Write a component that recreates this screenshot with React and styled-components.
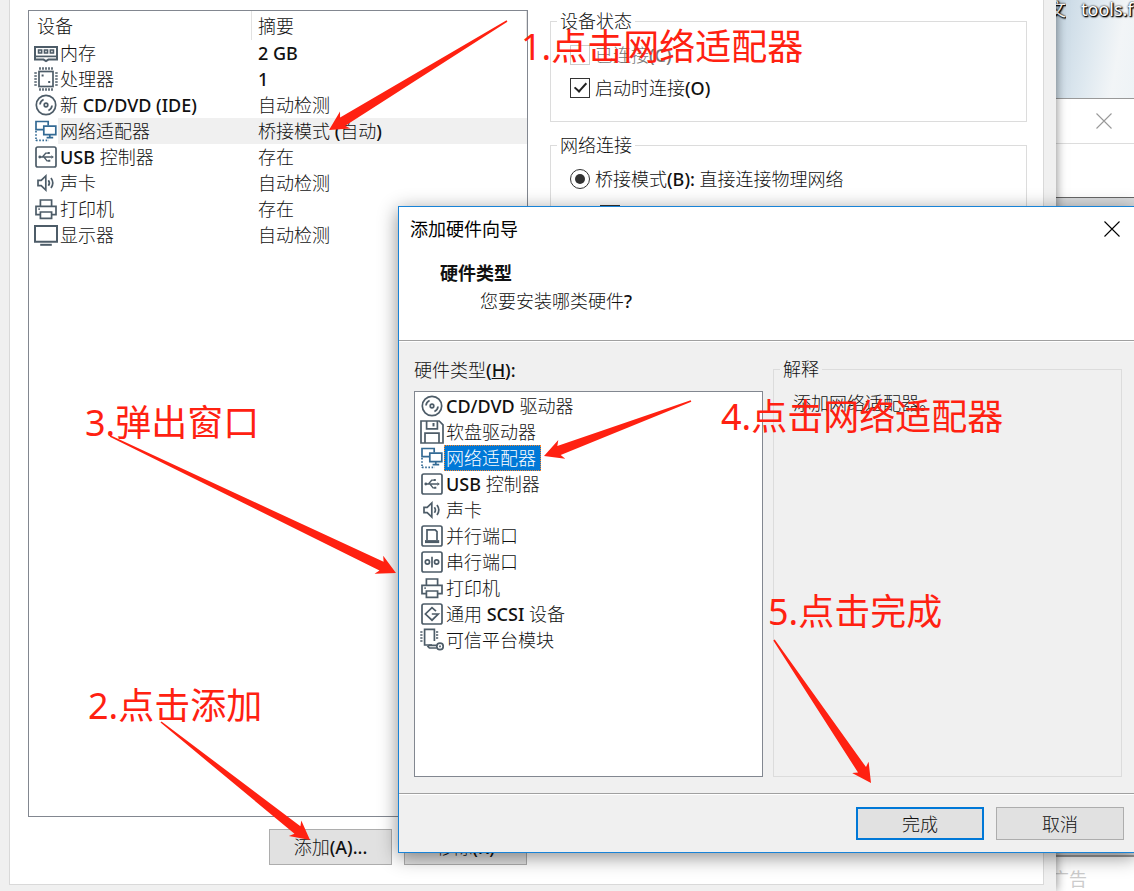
import React from "react";
import styled, { createGlobalStyle, css } from "styled-components";

const GlobalStyle = createGlobalStyle`
  *, *::before, *::after { box-sizing: border-box; }
  body {
    margin: 0;
    background: #f0f0f0;
    color: #111;
    font: 300 18px/24px "Noto Sans", "Noto Sans CJK SC", sans-serif;
  }
  button, input { font: inherit; color: inherit; margin: 0; }
`;

const Desktop = styled.div`
  position: relative;
  display: flex;
  min-height: 100vh;
  overflow: hidden;
`;

/* ---------- text ---------- */

const Latin = styled.span`
  font-weight: 500;
`;

// Interface text pairs a light Chinese face with a firmer Latin one.
function Mixed({ children }) {
  return (
    <span>
      {children
        .split(/([\x20-\x7e]+)/)
        .filter(Boolean)
        .map((run, i) => (/^[\x20-\x7e]/.test(run) ? <Latin key={i}>{run}</Latin> : run))}
    </span>
  );
}

/* ---------- icons ---------- */

const Glyph = styled.svg.attrs({ viewBox: "0 0 24 24", "aria-hidden": true })`
  flex: none;
  width: 24px;
  height: 24px;
  fill: none;
  stroke: ${(p) => p.$tint || "#4d5c68"};
  stroke-width: 1.7;
`;

const icons = {
  memory: (
    <Glyph>
      <path d="M1 6h22v12.6h-8.6L12 20l-2.4-1.4H1z" strokeWidth="2" />
      <path d="M1 15.4h22" />
      <path d="M4.6 9h3v3h-3zM10.5 9h3v3h-3zM16.4 9h3v3h-3z" />
    </Glyph>
  ),
  cpu: (
    <Glyph>
      <rect x="5" y="4.5" width="14" height="15" />
      <path d="M6 .3v2.4M9 .3v2.4M12 .3v2.4M15 .3v2.4M18 .3v2.4M6 21.3v2.4M9 21.3v2.4M12 21.3v2.4M15 21.3v2.4M18 21.3v2.4M.3 6h2.5M.3 9h2.5M.3 12h2.5M.3 15h2.5M.3 18h2.5M21.2 6h2.5M21.2 9h2.5M21.2 12h2.5M21.2 15h2.5M21.2 18h2.5" />
      <path d="M7.6 8.6h2M14.2 15h2" strokeWidth="2" />
    </Glyph>
  ),
  disc: (
    <Glyph>
      <circle cx="12" cy="12" r="9.7" />
      <circle cx="12" cy="12" r="1.8" />
      <path d="M6 11.5A6 6 0 0 1 9.6 6.5M18 12.5a6 6 0 0 1-3.6 5" />
    </Glyph>
  ),
  network: (
    <Glyph $tint="#336a94">
      <path d="M10 10.6H2V2.5h12.2v4" />
      <path d="M9.8 7.2h12v8.4h-12zM15.8 15.6v3.2M12.6 18.6h6.6" />
      <path d="M2 12v10M2 21.3h13" strokeDasharray="1.6 1.6" />
    </Glyph>
  ),
  usb: (
    <Glyph>
      <rect x="2" y="2" width="20" height="20" rx="1.8" />
      <path d="M5.5 12h12M8.4 12l3.3-3.8h2.6M10 12l3 3.8h2" strokeWidth="1.3" />
      <path d="M17.3 10.2l2.6 1.8-2.6 1.8z" fill="#4d5c68" stroke="none" />
      <circle cx="5.8" cy="12" r="1.4" fill="#4d5c68" stroke="none" />
      <path d="M13.8 7.1h2v2h-2zM14.3 14.8h2v2h-2z" fill="#4d5c68" stroke="none" />
    </Glyph>
  ),
  sound: (
    <Glyph>
      <path d="M4 9.3h3.2l4.6-4.4v14.2l-4.6-4.4H4z" />
      <path d="M14.4 9.2q2 2.8 0 5.6M17 7q3.6 5 0 10" />
    </Glyph>
  ),
  printer: (
    <Glyph>
      <path d="M6.4 9V3h11.2v6" />
      <path d="M6.4 17.6H2V9.4h20v8.2h-4.4" />
      <path d="M6.4 15h11.2v6.4H6.4z" />
      <path d="M4.4 12.2h1.4" />
    </Glyph>
  ),
  monitor: (
    <Glyph>
      <path d="M1 3h22v15.8H1z" strokeWidth="2" />
      <path d="M6.2 21.8h11.6" strokeWidth="2" />
    </Glyph>
  ),
  floppy: (
    <Glyph>
      <path d="M1 1h18.2L23 4.8V23H1z" />
      <path d="M6.6 1v7.8h10.8V1M5 23V13.2h14V23" />
      <path d="M13.5 3v3.4" strokeWidth="2" />
    </Glyph>
  ),
  parallel: (
    <Glyph>
      <rect x="2" y="2" width="20" height="20" rx="1.8" />
      <path d="M7 16V5.8h8.2L17 7.6V16" />
      <path d="M5 17.6h14.2" strokeWidth="3" />
    </Glyph>
  ),
  serial: (
    <Glyph>
      <rect x="2" y="2" width="20" height="20" rx="1.8" />
      <circle cx="7.4" cy="12" r="2.1" />
      <circle cx="16.6" cy="12" r="2.1" />
      <path d="M12 6.8v10.6" />
    </Glyph>
  ),
  scsi: (
    <Glyph>
      <rect x="2" y="2" width="20" height="20" rx="1.8" />
      <path d="M16 9.2L12 5.6 5.4 12l6.6 6.2 6.2-6.2h-6.4" />
    </Glyph>
  ),
  tpm: (
    <Glyph>
      <path d="M12 17H4.6V1.4h9.8V13" />
      <path d="M.3 4h2.2M.3 7h2.2M.3 10h2.2M.3 13h2.2M16 4h2.2M16 7h2.2M16 10h2.2" />
      <circle cx="20" cy="18.4" r="3.2" />
      <path d="M16.6 17.4H9.4L8 18.6l1.4 1.4h7.2" />
      <path d="M20 17.6v1.6" />
    </Glyph>
  ),
};

const Cross = styled.svg.attrs({ viewBox: "0 0 16 16", "aria-hidden": true })`
  display: block;
  width: 16px;
  height: 16px;
  fill: none;
  stroke: currentColor;
  stroke-width: 1.1;
`;

const CloseButton = styled.button`
  display: grid;
  place-items: center;
  width: 46px;
  height: 44px;
  padding: 0;
  border: 0;
  background: none;
  color: ${(p) => (p.$faded ? "#999" : "#000")};
`;

function Close({ label, faded }) {
  return (
    <CloseButton type="button" aria-label={label} $faded={faded}>
      <Cross>
        <path d="M.5.5l15 15M15.5.5l-15 15" />
      </Cross>
    </CloseButton>
  );
}

/* ---------- shared controls ---------- */

const PushButton = styled.button`
  width: ${(p) => (p.$wide ? 128 : 123)}px;
  height: ${(p) => (p.$wide ? 33 : 36)}px;
  padding: 0;
  background: #e1e1e1;
  border: ${(p) => (p.$primary ? "2px solid #0078d7" : "1px solid #adadad")};
`;

const Group = styled.fieldset`
  min-width: 0;
  margin: 0;
  padding: 6px 18px 17px;
  border: 1px solid #dcdcdc;
`;

const Legend = styled.legend`
  margin-left: -12px;
  padding: 0 3px;
  line-height: 22px;
`;

const Choice = styled.label`
  display: flex;
  align-items: center;
  gap: 5px;
  height: 33px;
  padding-left: ${(p) => (p.$nested ? 30 : 0)}px;
  margin-top: ${(p) => (p.$nested ? 3 : 0)}px;
  color: ${(p) => (p.$disabled ? "#777" : "inherit")};
`;

const boxShape = css`
  appearance: none;
  position: relative;
  flex: none;
  width: 20px;
  height: 20px;
  margin-left: 1px;
  background: #fff;
  border: 1px solid #333;
  &:disabled { border-color: #ccc; }
`;

const CheckInput = styled.input.attrs({ type: "checkbox" })`
  ${boxShape}
  &:checked::after {
    content: "";
    position: absolute;
    left: 6px;
    top: 1px;
    width: 7px;
    height: 12px;
    border: solid #222;
    border-width: 0 2px 2px 0;
    transform: rotate(42deg);
  }
`;

const RadioInput = styled.input.attrs({ type: "radio" })`
  ${boxShape}
  border-radius: 50%;
  &:checked::after {
    content: "";
    position: absolute;
    inset: 4px;
    border-radius: 50%;
    background: #333;
  }
`;

/* ---------- settings window ---------- */

const SettingsWindow = styled.main`
  position: relative;
  z-index: 1;
  display: flex;
  flex: 1;
  min-width: 0;
  padding: 0 12px 6px 9px;
  background: #f0f0f0;
  box-shadow: 0 0 10px rgba(0, 0, 0, 0.5);
`;

const SettingsPage = styled.div`
  display: flex;
  flex: 1;
  gap: 22px;
  min-width: 0;
  padding: 10px 16px 19px 18px;
  background: #fff;
  border: solid #d9d9d9;
  border-width: 0 1px 1px;
`;

const DeviceColumn = styled.section`
  display: flex;
  flex-direction: column;
  flex: none;
  gap: 12px;
  width: 500px;
`;

const DeviceFrame = styled.div`
  flex: 1;
  background: #fff;
  border: 1px solid #828790;
`;

const DeviceTable = styled.table`
  width: 100%;
  table-layout: fixed;
  border-spacing: 0;
  text-align: left;
`;

const HeadCell = styled.th`
  width: ${(p) => p.$width || "auto"};
  height: 29px;
  padding: 1px 0 0 ${(p) => (p.$width ? 8 : 6)}px;
  border-right: 1px solid #e2e2e2;
  font-weight: 300;
  line-height: 24px;
  vertical-align: middle;
`;

const DeviceName = styled.td`
  padding: 0 0 0 5px;
`;

const NameLine = styled.div`
  display: flex;
  align-items: center;
  height: 26px;
`;

const NameText = styled.span`
  flex: 1;
  padding-left: 2px;
  line-height: 26px;
  background: ${(p) => (p.$selected ? "#f0f0f0" : "none")};
`;

const DeviceSummary = styled.td`
  padding: 0 0 0 6px;
  line-height: 26px;
  background: ${(p) => (p.$selected ? "#f0f0f0" : "none")};
`;

const DeviceActions = styled.div`
  display: flex;
  justify-content: flex-end;
  gap: 12px;
  padding-right: 1px;
`;

const OptionsColumn = styled.section`
  display: flex;
  flex-direction: column;
  flex: 1;
  gap: 12px;
  min-width: 0;
`;

/* ---------- windows behind ---------- */

const BackColumn = styled.aside`
  display: flex;
  flex-direction: column;
  flex: none;
  width: 78px;
  background: #d9dbdd;
`;

const Wallpaper = styled.div`
  display: flex;
  gap: 15px;
  justify-content: flex-start;
  height: 98px;
  overflow: hidden;
  white-space: nowrap;
  background: linear-gradient(100deg, #c5d6e3 0%, #dfe9f0 45%, #f2f5f7 75%, #eef3f6 100%);
`;

const ShortcutName = styled.span`
  display: flex;
  justify-content: flex-end;
  width: ${(p) => (p.$cut ? "10px" : "auto")};
  height: 24px;
  margin-top: -3px;
  overflow: ${(p) => (p.$cut ? "hidden" : "visible")};
  color: #fff;
  font-weight: 400;
  text-shadow: 1px 1px 2px #000, 0 0 2px #000, 1px 1px 1px #000;
`;

const BackTitle = styled.div`
  display: flex;
  justify-content: flex-end;
  padding-right: 7px;
  background: #fff;
  border: solid #999;
  border-width: 1px 0 0;
`;

const BackBody = styled.div`
  height: 55px;
  background: #fff;
  border-top: 1px solid #ddd;
  border-bottom: 1px solid #666;
`;

const BackAd = styled.div`
  display: flex;
  align-items: center;
  height: 36px;
  margin-top: auto;
  padding-top: 10px;
  overflow: hidden;
  background: #fff;
  border-top: 2px solid #999;
  color: #ccc;
  font-weight: 400;
`;

const AdText = styled.span`
  display: flex;
  justify-content: flex-end;
  width: 31px;
  overflow: hidden;
  white-space: nowrap;
`;

/* ---------- add-hardware dialog ---------- */

const Dialog = styled.div`
  position: absolute;
  z-index: 2;
  left: 398px;
  right: -2px;
  top: 206px;
  display: flex;
  flex-direction: column;
  background: #f0f0f0;
  border: 1px solid #1883d7;
  box-shadow: 0 4px 18px rgba(0, 0, 0, 0.45);
`;

const TitleBar = styled.header`
  display: flex;
  align-items: center;
  justify-content: space-between;
  height: 43px;
  padding-left: 11px;
  background: #fff;
  color: #000;
  font-weight: 400;
`;

const Intro = styled.div`
  padding: 9px 41px 25px;
  background: #fff;
  border-bottom: 1px solid #a0a0a0;
  line-height: 28px;
`;

const IntroTitle = styled.h1`
  margin: 0;
  font-size: 18px;
  font-weight: 700;
  line-height: 28px;
`;

const IntroText = styled.p`
  margin: 0 0 0 40px;
`;

const DialogBody = styled.div`
  display: grid;
  grid-template-columns: 1fr 1fr;
  gap: 10px;
  padding: 16px 13px 16px 15px;
  border-top: 1px solid #fff;
`;

const TypeColumn = styled.div`
  display: flex;
  flex-direction: column;
  gap: 9px;
  min-width: 0;
`;

const TypeList = styled.ul`
  min-height: 386px;
  margin: 0;
  padding: 1px 0 0 5px;
  list-style: none;
  background: #fff;
  border: 1px solid #828790;
`;

const TypeItem = styled.li`
  display: flex;
  align-items: center;
  height: 26px;
`;

const TypeText = styled.span`
  padding: 0 5px 0 2px;
  line-height: 26px;
  ${(p) =>
    p.$selected &&
    css`
      color: #fff;
      background: #0078d7;
      outline: 1px dotted #ff8728;
      outline-offset: -1px;
    `}
`;

const ExplanationText = styled.p`
  margin: 5px 0 0 1px;
`;

const DialogFooter = styled.footer`
  display: flex;
  justify-content: flex-end;
  gap: 12px;
  padding: 13px 11px 12px 0;
  border-top: 1px solid #a0a0a0;
  box-shadow: inset 0 1px 0 #fff;
`;

/* ---------- red annotations ---------- */

const ArrowLayer = styled.svg`
  position: absolute;
  z-index: 3;
  left: 0;
  top: 0;
  width: 1134px;
  height: 891px;
  pointer-events: none;
  fill: #ff2111;
`;

const Note = styled.div`
  position: absolute;
  z-index: 3;
  left: ${(p) => p.$x}px;
  top: ${(p) => p.$y}px;
  color: #ff2111;
  font-size: 36px;
  font-weight: 400;
  line-height: 48px;
  white-space: nowrap;
  pointer-events: none;
`;

const notes = [
  { x: 521, y: 23, text: "1.点击网络适配器" },
  { x: 88, y: 682, text: "2.点击添加" },
  { x: 85, y: 399, text: "3.弹出窗口" },
  { x: 721, y: 393, text: "4.点击网络适配器" },
  { x: 768, y: 588, text: "5.点击完成" },
];

const arrows = [
  [507, 21, 329, 130],
  [161, 722, 310, 840],
  [110, 436, 396, 573],
  [691, 401, 544, 456],
  [774, 640, 871, 783],
];

// Tapered shaft from the tail to a swept-back arrow head.
function arrowPoints([x1, y1, x2, y2]) {
  const length = Math.hypot(x2 - x1, y2 - y1);
  const ux = (x2 - x1) / length;
  const uy = (y2 - y1) / length;
  const at = (back, side) =>
    `${(x2 - ux * back - uy * side).toFixed(1)},${(y2 - uy * back + ux * side).toFixed(1)}`;
  return [
    at(length, 0.8),
    at(16, 4.8),
    at(19, 10),
    at(0, 0),
    at(19, -10),
    at(16, -4.8),
    at(length, -0.8),
  ].join(" ");
}

/* ---------- data ---------- */

const devices = [
  ["memory", "内存", "2 GB"],
  ["cpu", "处理器", "1"],
  ["disc", "新 CD/DVD (IDE)", "自动检测"],
  ["network", "网络适配器", "桥接模式 (自动)"],
  ["usb", "USB 控制器", "存在"],
  ["sound", "声卡", "自动检测"],
  ["printer", "打印机", "存在"],
  ["monitor", "显示器", "自动检测"],
];

const hardware = [
  ["disc", "CD/DVD 驱动器"],
  ["floppy", "软盘驱动器"],
  ["network", "网络适配器"],
  ["usb", "USB 控制器"],
  ["sound", "声卡"],
  ["parallel", "并行端口"],
  ["serial", "串行端口"],
  ["printer", "打印机"],
  ["scsi", "通用 SCSI 设备"],
  ["tpm", "可信平台模块"],
];

export default function App() {
  return (
    <Desktop>
      <GlobalStyle />
      <SettingsWindow>
        <SettingsPage>
          <DeviceColumn>
            <DeviceFrame>
              <DeviceTable>
                <thead>
                  <tr>
                    <HeadCell $width="223px">设备</HeadCell>
                    <HeadCell>摘要</HeadCell>
                  </tr>
                </thead>
                <tbody>
                  {devices.map(([icon, name, summary]) => (
                    <tr key={icon}>
                      <DeviceName>
                        <NameLine>
                          {icons[icon]}
                          <NameText $selected={icon === "network"}>
                            <Mixed>{name}</Mixed>
                          </NameText>
                        </NameLine>
                      </DeviceName>
                      <DeviceSummary $selected={icon === "network"}>
                        <Mixed>{summary}</Mixed>
                      </DeviceSummary>
                    </tr>
                  ))}
                </tbody>
              </DeviceTable>
            </DeviceFrame>
            <DeviceActions>
              <PushButton type="button">
                <Mixed>添加(A)...</Mixed>
              </PushButton>
              <PushButton type="button">
                <Mixed>移除(R)</Mixed>
              </PushButton>
            </DeviceActions>
          </DeviceColumn>
          <OptionsColumn>
            <Group>
              <Legend>设备状态</Legend>
              <Choice $disabled>
                <CheckInput disabled />
                <Mixed>已连接(C)</Mixed>
              </Choice>
              <Choice>
                <CheckInput defaultChecked />
                <Mixed>启动时连接(O)</Mixed>
              </Choice>
            </Group>
            <Group>
              <Legend>网络连接</Legend>
              <Choice>
                <RadioInput name="connection" defaultChecked />
                <Mixed>桥接模式(B): 直接连接物理网络</Mixed>
              </Choice>
              <Choice $nested>
                <CheckInput aria-label="复制物理网络连接状态" />
              </Choice>
            </Group>
          </OptionsColumn>
        </SettingsPage>
      </SettingsWindow>

      <BackColumn>
        <Wallpaper>
          <ShortcutName $cut>文</ShortcutName>
          <ShortcutName>tools.f</ShortcutName>
        </Wallpaper>
        <BackTitle>
          <Close label="关闭" faded />
        </BackTitle>
        <BackBody />
        <BackAd>
          <AdText>广告</AdText>
        </BackAd>
      </BackColumn>

      <Dialog role="dialog" aria-labelledby="wizard-title">
        <TitleBar>
          <span id="wizard-title">添加硬件向导</span>
          <Close label="关闭向导" />
        </TitleBar>
        <Intro>
          <IntroTitle>硬件类型</IntroTitle>
          <IntroText>
            <Mixed>您要安装哪类硬件?</Mixed>
          </IntroText>
        </Intro>
        <DialogBody>
          <TypeColumn>
            <div id="type-label">
              硬件类型
              <Latin>
                (<u>H</u>):
              </Latin>
            </div>
            <TypeList aria-labelledby="type-label">
              {hardware.map(([icon, name]) => (
                <TypeItem key={icon}>
                  {icons[icon]}
                  <TypeText $selected={icon === "network"}>
                    <Mixed>{name}</Mixed>
                  </TypeText>
                </TypeItem>
              ))}
            </TypeList>
          </TypeColumn>
          <Group>
            <Legend>解释</Legend>
            <ExplanationText>添加网络适配器。</ExplanationText>
          </Group>
        </DialogBody>
        <DialogFooter>
          <PushButton type="button" $wide $primary>
            完成
          </PushButton>
          <PushButton type="button" $wide>
            取消
          </PushButton>
        </DialogFooter>
      </Dialog>

      <ArrowLayer viewBox="0 0 1134 891" aria-hidden="true">
        {arrows.map((arrow) => (
          <polygon key={arrow.join()} points={arrowPoints(arrow)} />
        ))}
      </ArrowLayer>
      {notes.map((note) => (
        <Note key={note.text} $x={note.x} $y={note.y}>
          {note.text}
        </Note>
      ))}
    </Desktop>
  );
}
